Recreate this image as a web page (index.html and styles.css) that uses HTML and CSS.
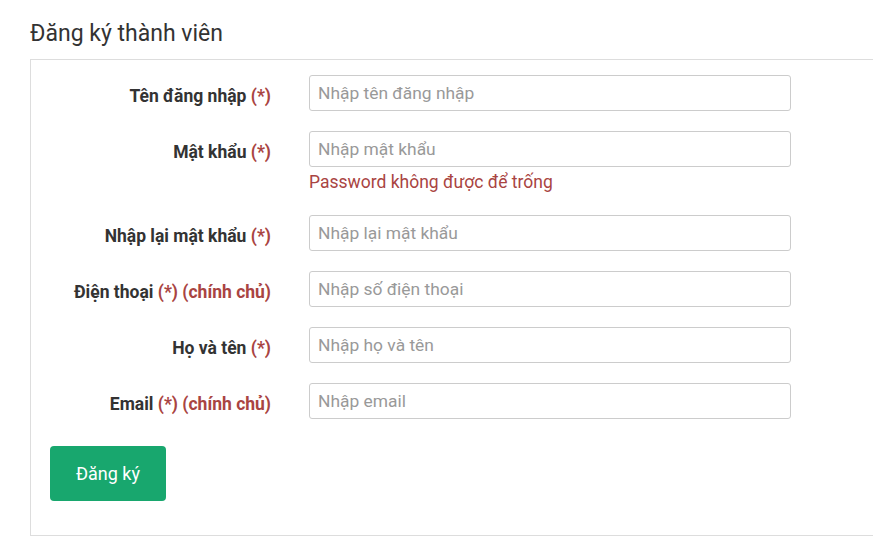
FILE: index.html
```html
<!DOCTYPE html>
<html lang="vi">
<head>
<meta charset="utf-8">
<title>Đăng ký thành viên</title>
<link rel="stylesheet" href="styles.css">
</head>
<body>
<div class="page">
  <h1 class="title">Đăng ký thành viên</h1>
  <form class="panel">
    <div class="row">
      <label class="label">Tên đăng nhập <span class="req">(*)</span></label>
      <div class="field"><input class="input" type="text" placeholder="Nhập tên đăng nhập"></div>
    </div>
    <div class="row">
      <label class="label">Mật khẩu <span class="req">(*)</span></label>
      <div class="field">
        <input class="input" type="password" placeholder="Nhập mật khẩu">
        <div class="error">Password không được để trống</div>
      </div>
    </div>
    <div class="row">
      <label class="label">Nhập lại mật khẩu <span class="req">(*)</span></label>
      <div class="field"><input class="input" type="password" placeholder="Nhập lại mật khẩu"></div>
    </div>
    <div class="row">
      <label class="label">Điện thoại <span class="req">(*) (chính chủ)</span></label>
      <div class="field"><input class="input" type="text" placeholder="Nhập số điện thoại"></div>
    </div>
    <div class="row">
      <label class="label">Họ và tên <span class="req">(*)</span></label>
      <div class="field"><input class="input" type="text" placeholder="Nhập họ và tên"></div>
    </div>
    <div class="row">
      <label class="label">Email <span class="req">(*) (chính chủ)</span></label>
      <div class="field"><input class="input" type="text" placeholder="Nhập email"></div>
    </div>
    <div class="actions">
      <button class="btn" type="button">Đăng ký</button>
    </div>
  </form>
</div>
</body>
</html>
```

FILE: styles.css
```css
html, body {
  margin: 0;
  padding: 0;
  background: #fff;
}
body {
  font-family: Roboto, "Liberation Sans", Arial, sans-serif;
  color: #333;
}
.page {
  padding-left: 30px;
  padding-top: 21px;
}
.title {
  margin: 0 0 12px 0;
  font-size: 23px;
  line-height: 26px;
  font-weight: 400;
  color: #333;
}
.panel {
  border: 1px solid #ddd;
  border-right: none;
  padding: 15px 0 34px 19px;
  margin: 0;
}
.row {
  display: grid;
  grid-template-columns: 221px 482px;
  column-gap: 38px;
  margin-bottom: 20.3px;
}
.label {
  text-align: right;
  font-weight: 700;
  font-size: 17.5px;
  line-height: 20px;
  padding-top: 11px;
  color: #333;
}
.req {
  color: #a94442;
}
.input {
  display: block;
  box-sizing: border-box;
  width: 482px;
  height: 36px;
  margin: 0;
  padding: 0 8px;
  border: 1px solid #ccc;
  border-radius: 3px;
  font-family: Roboto, "Liberation Sans", Arial, sans-serif;
  font-size: 17.4px;
  color: #555;
  background: #fff;
  outline: none;
}
.input::placeholder {
  color: #999;
}
.error {
  margin-top: 4px;
  font-size: 17.5px;
  line-height: 23px;
  color: #a94442;
}
.actions {
  padding-top: 6px;
}
.btn {
  width: 116px;
  height: 55px;
  border: none;
  border-radius: 4px;
  background: #18a76e;
  color: #fff;
  font-family: Roboto, "Liberation Sans", Arial, sans-serif;
  font-size: 18px;
  font-weight: 400;
  padding: 0;
  cursor: pointer;
}
```
